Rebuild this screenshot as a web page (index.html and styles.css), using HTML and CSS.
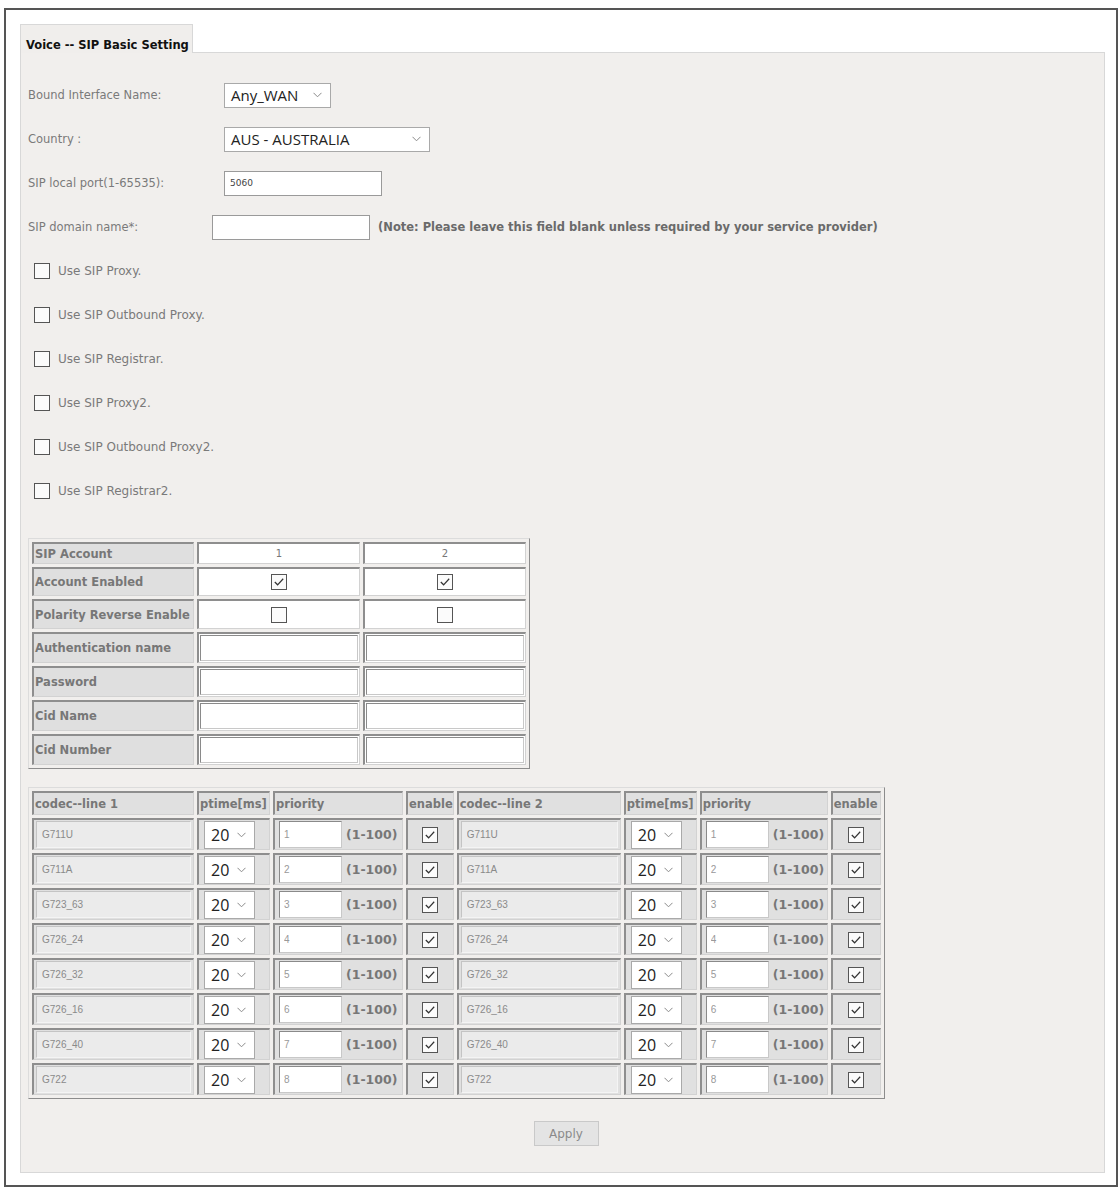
FILE: index.html
```html
<!DOCTYPE html>
<html lang="en">
<head>
  <meta charset="UTF-8" />
  <title>Voice -- SIP Basic Setting</title>
  <link rel="stylesheet" href="styles.css">
</head>
<body>

  <div class="frame">
    <div class="tabs">
      <div class="tab">Voice -- SIP Basic Setting</div>
      <div class="tab-fill"></div>
    </div>

    <div class="panel">
      <div class="row">
        <label class="lbl">Bound Interface Name:</label>
        <div class="select sel-wan"><span>Any_WAN</span><svg class="chev" width="9" height="6" viewBox="0 0 9 6"><polyline points="0.5,0.8 4.5,4.8 8.5,0.8"/></svg></div>
      </div>
      <div class="row">
        <label class="lbl">Country :</label>
        <div class="select sel-country"><span>AUS - AUSTRALIA</span><svg class="chev" width="9" height="6" viewBox="0 0 9 6"><polyline points="0.5,0.8 4.5,4.8 8.5,0.8"/></svg></div>
      </div>
      <div class="row">
        <label class="lbl">SIP local port(1-65535):</label>
        <input class="txt" type="text" value="5060">
      </div>
      <div class="row">
        <label class="lbl lbl-short">SIP domain name*:</label>
        <input class="txt" type="text" value="">
        <span class="note">(Note: Please leave this field blank unless required by your service provider)</span>
      </div>

      <div class="row"><label class="opt"><span class="check"></span>Use SIP Proxy.</label></div>
      <div class="row"><label class="opt"><span class="check"></span>Use SIP Outbound Proxy.</label></div>
      <div class="row"><label class="opt"><span class="check"></span>Use SIP Registrar.</label></div>
      <div class="row"><label class="opt"><span class="check"></span>Use SIP Proxy2.</label></div>
      <div class="row"><label class="opt"><span class="check"></span>Use SIP Outbound Proxy2.</label></div>
      <div class="row"><label class="opt"><span class="check"></span>Use SIP Registrar2.</label></div>

      <table class="grid account">
        <tr class="r1">
          <th>SIP Account</th>
          <td class="num">1</td>
          <td class="num">2</td>
        </tr>
        <tr class="r2">
          <th>Account Enabled</th>
          <td class="mid"><span class="check on"><svg width="15" height="15" viewBox="0 0 15 15"><polyline points="3,7.5 6,10.5 12,4"/></svg></span></td>
          <td class="mid"><span class="check on"><svg width="15" height="15" viewBox="0 0 15 15"><polyline points="3,7.5 6,10.5 12,4"/></svg></span></td>
        </tr>
        <tr class="r3">
          <th>Polarity Reverse Enable</th>
          <td class="mid"><span class="check"></span></td>
          <td class="mid"><span class="check"></span></td>
        </tr>
        <tr class="r4">
          <th>Authentication name</th>
          <td class="fld"><input type="text"></td>
          <td class="fld"><input type="text"></td>
        </tr>
        <tr class="r4">
          <th>Password</th>
          <td class="fld"><input type="password"></td>
          <td class="fld"><input type="password"></td>
        </tr>
        <tr class="r4">
          <th>Cid Name</th>
          <td class="fld"><input type="text"></td>
          <td class="fld"><input type="text"></td>
        </tr>
        <tr class="r4">
          <th>Cid Number</th>
          <td class="fld"><input type="text"></td>
          <td class="fld"><input type="text"></td>
        </tr>
      </table>

      <table class="grid codec">
        <tr class="head">
          <th class="c-name">codec--line 1</th>
          <th class="c-pt">ptime[ms]</th>
          <th class="c-pri">priority</th>
          <th class="c-en">enable</th>
          <th class="c-name2">codec--line 2</th>
          <th class="c-pt">ptime[ms]</th>
          <th class="c-pri2">priority</th>
          <th class="c-en2">enable</th>
        </tr>
      </table>

      <div class="actions">
        <button class="btn" type="button">Apply</button>
      </div>
    </div>
  </div>

<script>
  var codecs = ['G711U', 'G711A', 'G723_63', 'G726_24', 'G726_32', 'G726_16', 'G726_40', 'G722'];
  var table = document.querySelector('.codec tbody');

  function line(name, prio) {
    return '<td><input class="ro" type="text" readonly value="' + name + '"></td>' +
      '<td><div class="select sel-pt"><span>20</span><svg class="chev" width="9" height="6" viewBox="0 0 9 6"><polyline points="0.5,0.8 4.5,4.8 8.5,0.8"/></svg></div></td>' +
      '<td><div class="pri"><input type="text" value="' + prio + '"><span class="range">(1-100)</span></div></td>' +
      '<td class="mid"><span class="check on"><svg width="15" height="15" viewBox="0 0 15 15"><polyline points="3,7.5 6,10.5 12,4"/></svg></span></td>';
  }

  codecs.forEach(function(name, i) {
    var tr = document.createElement('tr');
    tr.className = 'data';
    tr.innerHTML = line(name, i + 1) + line(name, i + 1);
    table.appendChild(tr);
  });
</script>

</body>
</html>
```

FILE: styles.css
```css
* {
  box-sizing: border-box;
}

body {
  margin: 0;
  padding: 8px 2px 3px 4px;
  background: #ffffff;
  font-family: 'DejaVu Sans', sans-serif;
  font-size: 11.5px;
  color: #7a7a7a;
}

.frame {
  border: 2px solid #555555;
  padding: 14px 11px 12px 14px;
  background: #ffffff;
}

.tabs {
  display: flex;
}

.tab {
  width: 173px;
  height: 29px;
  padding: 13px 0 0 5px;
  background: #f0eeec;
  border: 1px solid #d8d8d8;
  border-bottom: none;
  font-weight: bold;
  font-size: 11.5px;
  color: #111111;
  white-space: nowrap;
}

.tab-fill {
  flex: 1;
  border-bottom: 1px solid #d8d8d8;
}

.panel {
  background: #f1efed;
  border: 1px solid #d8d8d8;
  border-top: none;
  padding: 20px 0 26px 7px;
}

.row {
  display: flex;
  align-items: center;
  height: 44px;
}

.lbl {
  width: 196px;
  flex: none;
}

.lbl-short {
  width: 184px;
}

.select {
  display: flex;
  align-items: center;
  justify-content: space-between;
  height: 25px;
  padding: 0 8px 0 6px;
  background: #ffffff;
  border: 1px solid #a9a9a9;
  font-family: 'Open Sans', sans-serif;
  font-size: 15px;
  color: #222222;
}

.sel-wan {
  width: 107px;
}

.sel-country {
  width: 206px;
}

.chev {
  fill: none;
  stroke: #8a8a8a;
  stroke-width: 1;
}

.txt {
  width: 158px;
  height: 25px;
  padding: 0 5px;
  border: 1px solid #9a9a9a;
  background: #ffffff;
  font-family: 'DejaVu Sans', sans-serif;
  font-size: 9px;
  color: #444444;
}

.note {
  margin-left: 8px;
  font-weight: bold;
  font-size: 11.5px;
  color: #6a6a6a;
  white-space: nowrap;
}

.opt {
  display: flex;
  align-items: center;
  margin-left: 6px;
  font-size: 12px;
}

.opt .check {
  margin-right: 8px;
}

.check {
  display: inline-block;
  width: 16px;
  height: 16px;
  border: 1px solid #555555;
  background: #fbfbfb;
  vertical-align: middle;
}

.check svg {
  display: block;
  width: 14px;
  height: 14px;
  fill: none;
  stroke: #333333;
  stroke-width: 1.3;
}

/* tables */

.grid {
  border-collapse: separate;
  border-spacing: 3px;
  border: 1px solid;
  border-color: #dcdcdc #8c8c8c #8c8c8c #dcdcdc;
}

.grid th,
.grid td {
  border: 1px solid;
  border-width: 2px 1px 1px 2px;
  border-color: #8e8e8e #d2d2d2 #d2d2d2 #8e8e8e;
  padding: 0;
}

.grid th {
  background: #dfdfdf;
  text-align: left;
  font-weight: bold;
  font-size: 11.5px;
  color: #777777;
  padding-left: 1px;
  white-space: nowrap;
  overflow: hidden;
}

.account {
  margin-top: 25px;
}

.account th {
  width: 162px;
  max-width: 162px;
}

.account td {
  width: 163px;
  background: #ffffff;
}

.account .r1 th, .account .r1 td { height: 22px; }
.account .r2 th, .account .r2 td { height: 29px; }
.account .r3 th, .account .r3 td { height: 30px; }
.account .r4 th, .account .r4 td { height: 30px; }

.num {
  text-align: center;
  color: #777777;
  font-size: 10px;
}

.mid {
  text-align: center;
}

.fld {
  padding: 1px !important;
}

.fld input {
  display: block;
  width: 100%;
  height: 26px;
  border: 1px solid;
  border-color: #8a8a8a #c8c8c8 #c8c8c8 #8a8a8a;
  background: #ffffff;
}

.codec {
  margin-top: 18px;
}

.codec th,
.codec td {
  background: #e0e0e0;
}

.codec .head th {
  height: 24px;
}

.codec .data td {
  height: 32px;
  padding: 0 2px;
  white-space: nowrap;
}

.c-name { width: 162px; }
.c-pt { width: 73px; }
.c-pri { width: 130px; }
.c-en { width: 47px; }
.c-name2 { width: 164px; }
.c-pri2 { width: 128px; }
.c-en2 { width: 50px; }

.ro {
  width: 100%;
  height: 27px;
  padding: 0 5px;
  border: 1px solid;
  border-color: #c4c4c4 #f4f4f4 #f4f4f4 #c4c4c4;
  background: #ebebeb;
  font-family: 'Liberation Sans', sans-serif;
  font-size: 10px;
  color: #8a8a8a;
}

.sel-pt {
  width: 51px;
  height: 28px;
  margin-left: 3px;
  font-size: 16px;
}

.pri {
  display: flex;
  align-items: center;
}

.pri input {
  flex: none;
  width: 63px;
  height: 27px;
  margin-left: 2px;
  padding: 0 4px;
  border: 1px solid;
  border-color: #8a8a8a #c8c8c8 #c8c8c8 #8a8a8a;
  background: #ffffff;
  font-family: 'Liberation Sans', sans-serif;
  font-size: 10px;
  color: #999999;
}

.range {
  margin-left: 4px;
  font-weight: bold;
  font-size: 12.5px;
  color: #777777;
  white-space: nowrap;
}

.actions {
  display: flex;
  justify-content: center;
  margin-top: 22px;
}

.btn {
  width: 65px;
  height: 25px;
  background: #e4e4e4;
  border: 1px solid #c9c9c9;
  font-family: 'DejaVu Sans', sans-serif;
  font-size: 12px;
  color: #8a8a8a;
}
```
